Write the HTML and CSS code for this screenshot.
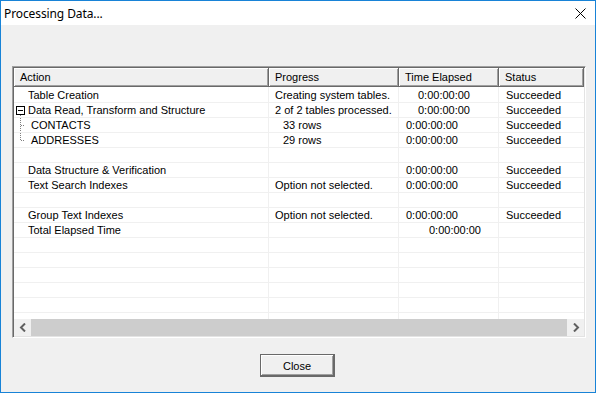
FILE: index.html
```html
<!DOCTYPE html>
<html lang="en">
<head>
    <meta charset="UTF-8">
    <title>Processing Data...</title>
    <link rel="stylesheet" href="styles.css">
</head>
<body>
    <div class="window">
        <div class="titlebar">
            <span class="title">Processing Data...</span>
            <svg class="close-x" width="11" height="11" viewBox="0 0 11 11">
                <path d="M0.5 0.5 L10.5 10.5 M10.5 0.5 L0.5 10.5" stroke="#000" stroke-width="1" fill="none"/>
            </svg>
        </div>

        <div class="content">
            <div class="list">
                <div class="grid">
                    <table>
                        <colgroup>
                            <col class="c-action">
                            <col class="c-progress">
                            <col class="c-time">
                            <col class="c-status">
                        </colgroup>
                        <thead>
                            <tr>
                                <th>Action</th>
                                <th>Progress</th>
                                <th>Time Elapsed</th>
                                <th>Status</th>
                            </tr>
                        </thead>
                        <tbody>
                            <tr>
                                <td class="act">Table Creation</td>
                                <td class="p1">Creating system tables.</td>
                                <td class="t2">0:00:00:00</td>
                                <td class="s1">Succeeded</td>
                            </tr>
                            <tr>
                                <td>
                                    <div class="tree">
                                        <svg width="14" height="14" viewBox="0 0 14 14">
                                            <rect x="2.5" y="3.5" width="8" height="8" fill="#fff" stroke="#000"/>
                                            <path d="M4 7.5 H9" stroke="#000"/>
                                            <path d="M6.5 12 V14" stroke="#808080" stroke-dasharray="1 1"/>
                                        </svg>
                                        <span>Data Read, Transform and Structure</span>
                                    </div>
                                </td>
                                <td class="p1">2 of 2 tables processed.</td>
                                <td class="t2">0:00:00:00</td>
                                <td class="s1">Succeeded</td>
                            </tr>
                            <tr>
                                <td>
                                    <div class="tree">
                                        <svg width="17" height="14" viewBox="0 0 17 14">
                                            <path d="M6.5 0 V14 M7 7.5 H11" stroke="#808080" stroke-dasharray="1 1"/>
                                        </svg>
                                        <span>CONTACTS</span>
                                    </div>
                                </td>
                                <td class="p2">33 rows</td>
                                <td class="t1">0:00:00:00</td>
                                <td class="s1">Succeeded</td>
                            </tr>
                            <tr>
                                <td>
                                    <div class="tree">
                                        <svg width="17" height="14" viewBox="0 0 17 14">
                                            <path d="M6.5 0 V8 M7 7.5 H11" stroke="#808080" stroke-dasharray="1 1"/>
                                        </svg>
                                        <span>ADDRESSES</span>
                                    </div>
                                </td>
                                <td class="p2">29 rows</td>
                                <td class="t1">0:00:00:00</td>
                                <td class="s1">Succeeded</td>
                            </tr>
                            <tr><td></td><td></td><td></td><td></td></tr>
                            <tr>
                                <td class="act">Data Structure &amp; Verification</td>
                                <td></td>
                                <td class="t1">0:00:00:00</td>
                                <td class="s1">Succeeded</td>
                            </tr>
                            <tr>
                                <td class="act">Text Search Indexes</td>
                                <td class="p1">Option not selected.</td>
                                <td class="t1">0:00:00:00</td>
                                <td class="s1">Succeeded</td>
                            </tr>
                            <tr><td></td><td></td><td></td><td></td></tr>
                            <tr>
                                <td class="act">Group Text Indexes</td>
                                <td class="p1">Option not selected.</td>
                                <td class="t1">0:00:00:00</td>
                                <td class="s1">Succeeded</td>
                            </tr>
                            <tr>
                                <td class="act">Total Elapsed Time</td>
                                <td></td>
                                <td class="t3">0:00:00:00</td>
                                <td></td>
                            </tr>
                            <tr><td></td><td></td><td></td><td></td></tr>
                            <tr><td></td><td></td><td></td><td></td></tr>
                            <tr><td></td><td></td><td></td><td></td></tr>
                            <tr><td></td><td></td><td></td><td></td></tr>
                            <tr><td></td><td></td><td></td><td></td></tr>
                            <tr><td></td><td></td><td></td><td></td></tr>
                        </tbody>
                    </table>
                </div>
                <div class="hscroll">
                    <div class="sb-btn">
                        <svg width="8" height="9" viewBox="0 0 8 9">
                            <path d="M6 0.5 L2 4.5 L6 8.5" stroke="#606060" stroke-width="2" fill="none"/>
                        </svg>
                    </div>
                    <div class="sb-track"></div>
                    <div class="sb-btn">
                        <svg width="8" height="9" viewBox="0 0 8 9">
                            <path d="M2 0.5 L6 4.5 L2 8.5" stroke="#606060" stroke-width="2" fill="none"/>
                        </svg>
                    </div>
                </div>
            </div>

            <div class="actions">
                <button class="btn">Close</button>
            </div>
        </div>
    </div>
</body>
</html>
```

FILE: styles.css
```css
body {
    margin: 0;
    padding: 0;
    background: #f0f0f0;
    font-family: "Liberation Sans", Arial, sans-serif;
    font-size: 11px;
    color: #000;
}
.window {
    width: 596px;
    height: 393px;
    box-sizing: border-box;
    border: 1px solid #1883d7;
    background: #f0f0f0;
    display: flex;
    flex-direction: column;
}
.titlebar {
    height: 24px;
    background: #ffffff;
    display: flex;
    align-items: center;
    justify-content: space-between;
    padding: 0 9px 0 3px;
}
.title {
    font-family: "Noto Sans", "Open Sans", sans-serif;
    font-size: 12px;
    letter-spacing: -0.1px;
    padding-top: 1px;
}
.close-x {
    display: block;
    margin-top: 1px;
}
.content {
    flex: 1;
    padding: 41px 9px 0 11px;
}
.list {
    width: 574px;
    box-sizing: border-box;
    border-top: 1px solid #a0a0a0;
    border-left: 1px solid #a0a0a0;
    border-right: 1px solid #ffffff;
    border-bottom: 1px solid #ffffff;
    box-shadow: inset 1px 1px 0 #696969, inset -1px -1px 0 #e3e3e3;
    padding: 1px;
    background: #ffffff;
    display: flex;
    flex-direction: column;
}
.grid {
    height: 251px;
    overflow: hidden;
}
table {
    width: 570px;
    table-layout: fixed;
    border-collapse: separate;
    border-spacing: 0;
}
.c-action { width: 255px; }
.c-progress { width: 130px; }
.c-time { width: 100px; }
.c-status { width: 85px; }
th {
    height: 18px;
    padding: 0 0 0 6px;
    text-align: left;
    font-weight: normal;
    background: #f0f0f0;
    border-right: 1px solid #696969;
    border-bottom: 1px solid #696969;
    box-shadow: inset 1px 1px 0 #ffffff, inset -1px -1px 0 #a0a0a0;
    white-space: nowrap;
}
td {
    height: 14px;
    line-height: 14px;
    padding: 0;
    border-bottom: 1px solid #f0f0f0;
    border-right: 1px solid #f0f0f0;
    white-space: nowrap;
    overflow: hidden;
}
td:last-child {
    border-right: none;
}
tbody tr:first-child td {
    padding-top: 1px;
}
.act { padding-left: 14px; }
.tree {
    display: flex;
    align-items: flex-start;
    height: 14px;
}
.tree svg {
    display: block;
    flex: none;
}
.p1 { padding-left: 6px; }
.p2 { padding-left: 14px; }
.t1 { padding-left: 7px; }
.t2 { padding-left: 19px; }
.t3 { padding-left: 30px; }
.s1 { padding-left: 7px; }
.hscroll {
    height: 17px;
    display: flex;
    background: #cdcdcd;
}
.sb-btn {
    width: 17px;
    background: #f0f0f0;
    display: flex;
    align-items: center;
    justify-content: center;
}
.sb-track {
    flex: 1;
}
.actions {
    display: flex;
    justify-content: center;
    padding: 16px 4px 0 0;
}
.btn {
    width: 75px;
    height: 23px;
    font-family: "Liberation Sans", Arial, sans-serif;
    font-size: 11px;
    color: #000;
    background: #f0f0f0;
    border: 1px solid #696969;
    box-shadow: inset -1px -1px 0 #696969, inset 1px 1px 0 #ffffff, inset -2px -2px 0 #a0a0a0;
    padding: 0;
}
```
